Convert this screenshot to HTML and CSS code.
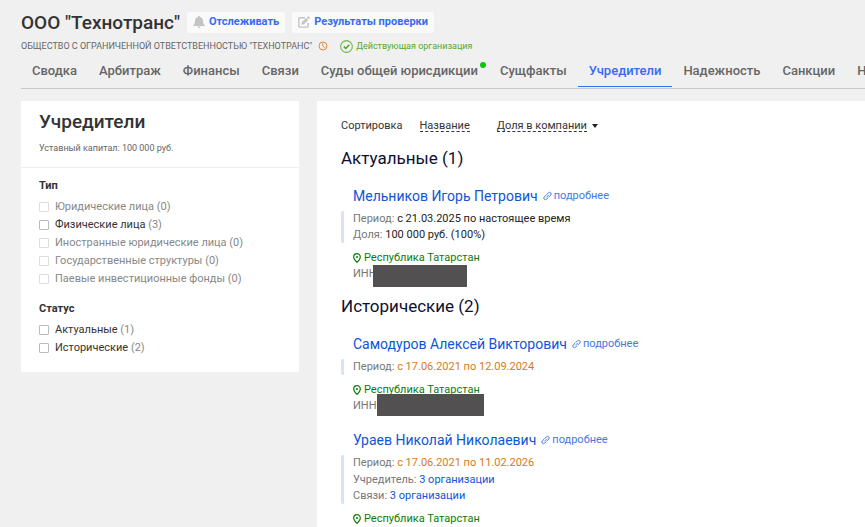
FILE: index.html
```html
<!DOCTYPE html>
<html lang="ru">
<head>
<meta charset="utf-8">
<meta name="viewport" content="width=device-width, initial-scale=1">
<title>ООО "Технотранс"</title>
<link rel="stylesheet" href="styles.css">
</head>
<body>
<svg class="sprite" aria-hidden="true">
  <symbol id="link" viewBox="0 0 10 10"><g fill="none" stroke="currentColor" stroke-width="1.1" stroke-linecap="round"><path d="M4 6.2 6.2 4M4.3 3.2 6 1.5a1.7 1.7 0 0 1 2.6 2.5L6.9 5.700M5.700 6.900 4 8.500a1.700 1.700 0 0 1-2.600-2.500L3.200 4.300"/></g></symbol>
  <symbol id="pin" viewBox="0 0 8 10"><path d="M4 9.300C2 7.300.7 5.700.7 3.900a3.300 3.300 0 0 1 6.600 0C7.300 5.700 6 7.300 4 9.300Z" fill="none" stroke="currentColor" stroke-width="1.200"/><circle cx="4" cy="4" r="1" fill="currentColor"/></symbol>
</svg>
<header class="header">
  <div class="title-row">
    <h1 class="company">ООО "Технотранс"</h1>
    <button class="action" type="button"><svg class="bell" viewBox="0 0 12 12"><path d="M6 0c.6 0 1 .4 1 1 1.900.5 3 1.900 3 4 0 2.500.7 3.300 1.500 4 .4.400.200 1-.400 1H.9c-.6 0-.8-.6-.4-1C1.300 8.300 2 7.500 2 5c0-2.100 1.100-3.500 3-4 0-.6.4-1 1-1ZM4.500 10.600h3a1.500 1.400 0 0 1-3 0Z" fill="#c4c4c4"/></svg>Отслеживать</button>
    <button class="action" type="button"><svg class="edit" viewBox="0 0 12 12"><path d="M7 1.700H2A1.200 1.200 0 0 0 .8 2.900v7A1.200 1.200 0 0 0 2 11.100h7a1.200 1.200 0 0 0 1.200-1.200V7" fill="none" stroke="#c4c4c4" stroke-width="1.400"/><path d="m3.800 6.300 4.400-4.400 2 2-4.400 4.400-2.300.400ZM8.800 1.300 9.700.4q.5-.4 1 0l1 1q.4.500 0 1l-.9.900Z" fill="#c4c4c4"/></svg>Результаты проверки</button>
  </div>
  <div class="legal">
    <span>ОБЩЕСТВО С ОГРАНИЧЕННОЙ ОТВЕТСТВЕННОСТЬЮ "ТЕХНОТРАНС"</span>
    <svg class="clock" viewBox="0 0 10 10"><g fill="none" stroke="#e08a3c"><circle cx="5" cy="5" r="4"/><path d="M4.700 2.500V5l2 1.600"/></g></svg>
    <span class="state"><svg class="check" viewBox="0 0 12 12"><circle cx="6" cy="6" r="5.400" fill="none" stroke="#6fb944"/><path d="m3.500 6 1.800 1.800 3.300-3.400" fill="none" stroke="#4aa51c" stroke-width="1.400"/></svg>Действующая организация</span>
  </div>
  <nav class="tabs">
    <a class="tab" href="#">Сводка</a>
    <a class="tab" href="#">Арбитраж</a>
    <a class="tab" href="#">Финансы</a>
    <a class="tab" href="#">Связи</a>
    <a class="tab dotted" href="#">Суды общей юрисдикции</a>
    <a class="tab" href="#">Сущфакты</a>
    <a class="tab active" href="#" aria-current="page">Учредители</a>
    <a class="tab" href="#">Надежность</a>
    <a class="tab" href="#">Санкции</a>
    <a class="tab" href="#">Новости</a>
  </nav>
</header>
<div class="layout">
  <aside class="filters">
    <div class="filters-head">
      <h2 class="filters-title">Учредители</h2>
      <p class="capital">Уставный капитал: 100 000 руб.</p>
    </div>
    <fieldset class="group">
      <legend>Тип</legend>
      <label class="option off"><input type="checkbox" disabled><span>Юридические лица <i>(0)</i></span></label>
      <label class="option"><input type="checkbox"><span>Физические лица <i>(3)</i></span></label>
      <label class="option off"><input type="checkbox" disabled><span>Иностранные юридические лица <i>(0)</i></span></label>
      <label class="option off"><input type="checkbox" disabled><span>Государственные структуры <i>(0)</i></span></label>
      <label class="option off"><input type="checkbox" disabled><span>Паевые инвестиционные фонды <i>(0)</i></span></label>
    </fieldset>
    <fieldset class="group">
      <legend>Статус</legend>
      <label class="option"><input type="checkbox"><span>Актуальные <i>(1)</i></span></label>
      <label class="option"><input type="checkbox"><span>Исторические <i>(2)</i></span></label>
    </fieldset>
  </aside>
  <main class="content">
    <div class="sort">
      <span>Сортировка</span>
      <button type="button" class="sort-by"><span>Название</span></button>
      <button type="button" class="sort-by current"><span>Доля в компании</span></button>
    </div>
    <section>
      <h2 class="section-title">Актуальные (1)</h2>
      <article class="founder">
        <h3 class="name"><a href="#">Мельников Игорь Петрович</a><a class="more" href="#"><svg><use href="#link"/></svg>подробнее</a></h3>
        <div class="facts">
          <p>Период: <b>с 21.03.2025 по настоящее время</b></p>
          <p>Доля: <b>100 000 руб. (100%)</b></p>
        </div>
        <p class="region"><svg><use href="#pin"/></svg>Республика Татарстан</p>
        <p class="inn">ИНН:<span class="mask"></span></p>
      </article>
    </section>
    <section>
      <h2 class="section-title">Исторические (2)</h2>
      <article class="founder">
        <h3 class="name"><a href="#">Самодуров Алексей Викторович</a><a class="more" href="#"><svg><use href="#link"/></svg>подробнее</a></h3>
        <div class="facts">
          <p>Период: <b class="past">с 17.06.2021 по 12.09.2024</b></p>
        </div>
        <p class="region"><svg><use href="#pin"/></svg>Республика Татарстан</p>
        <p class="inn">ИНН:<span class="mask wide"></span></p>
      </article>
      <article class="founder">
        <h3 class="name"><a href="#">Ураев Николай Николаевич</a><a class="more" href="#"><svg><use href="#link"/></svg>подробнее</a></h3>
        <div class="facts">
          <p>Период: <b class="past">с 17.06.2021 по 11.02.2026</b></p>
          <p class="relation">Учредитель: <a href="#">3 организации</a></p>
          <p>Связи: <a href="#">3 организации</a></p>
        </div>
        <p class="region"><svg><use href="#pin"/></svg>Республика Татарстан</p>
      </article>
    </section>
  </main>
</div>
</body>
</html>
```
FILE: styles.css
```css
* { box-sizing: border-box; margin: 0; padding: 0; }
body {
  display: flex;
  flex-direction: column;
  min-height: 100vh;
  background: #f0f0f0;
  color: #333;
  font: 11px/16px Roboto, sans-serif;
}
a { color: #0f55d8; text-decoration: none; }
button { border: 0; background: none; font: inherit; color: inherit; cursor: pointer; }
svg { flex: none; }
.sprite { position: absolute; width: 0; height: 0; }

.header { padding: 12px 0 0 21px; }
.title-row { display: flex; align-items: center; gap: 7px; white-space: nowrap; }
.company { font-size: 19px; line-height: 21px; font-weight: 500; color: #333; }
.action {
  display: flex;
  align-items: center;
  gap: 4px;
  height: 21px;
  padding: 0 6px 1px;
  border-radius: 3px;
  background: #fafafa;
  color: #356bf5;
  font-weight: 700;
}
.bell, .edit { width: 12px; height: 12px; }
.legal { display: flex; align-items: center; gap: 6px; height: 16px; margin-top: 5px; font-size: 9px; color: #666; white-space: nowrap; }
.clock { width: 10px; height: 10px; }
.state { display: flex; align-items: center; gap: 3px; margin-left: 6px; color: #55aa26; }
.check { width: 13px; height: 13px; }

.tabs { display: flex; height: 35px; padding-bottom: 1px; border-bottom: 1px solid #c8c8c8; overflow: hidden; white-space: nowrap; }
.tab { position: relative; flex: none; height: 33px; padding: 9px 11px 0; border-bottom: 1px solid transparent; color: #666; font-size: 13px; font-weight: 500; }
.tab.active { color: #356bf5; border-color: #356bf5; }
.dotted::after { content: ""; position: absolute; top: 8px; right: 3px; width: 6px; height: 6px; border-radius: 50%; background: #0bc50b; }

.layout { flex: 1; display: grid; grid-template-columns: 278px minmax(0, 1fr); gap: 18px; padding: 12px 0 0 21px; }
.filters { align-self: start; padding-bottom: 15px; background: #fff; }
.filters-head { padding: 11px 18px; border-bottom: 1px solid #eee; }
.filters-title { font-size: 19px; line-height: 20px; font-weight: 500; }
.capital { margin-top: 8px; font-size: 9px; color: #666; }
.group { border: 0; padding: 10px 18px 0; }
.group + .group { padding-top: 13px; }
.group legend { float: left; width: 100%; margin-bottom: 4px; font-weight: 700; }
.option { display: flex; clear: both; align-items: center; gap: 6px; height: 18px; }
.option input { appearance: none; width: 10px; height: 10px; border: 1px solid #bbb; border-radius: 1px; }
.option i { font-style: normal; color: #888; }
.off { color: #888; }
.off input { border-color: #ddd; }

.content { padding: 17px 24px 0; background: #fff; }
.sort { display: flex; gap: 17px; }
.sort-by { display: flex; align-items: center; gap: 5px; }
.sort-by span { line-height: 11px; border-bottom: 1px dashed #333; }
.current { margin-left: 10px; }
.current::after { content: ""; border: 3px solid transparent; border-top: 4px solid #222; border-bottom: 0; }
.section-title { margin-top: 14px; font-size: 17px; line-height: 20px; font-weight: 400; color: #0b1033; }
.founder { padding-left: 12px; }
.section-title + .founder { margin-top: 18px; }
.founder + .founder { margin-top: 16px; }
.name { display: flex; align-items: center; gap: 5px; font-size: 14px; line-height: 20px; font-weight: 400; }
.more { display: flex; align-items: center; gap: 2px; font-size: 11px; color: #4678e0; }
.more svg { width: 9px; height: 10px; }
.facts { margin: 5px 0 0 -12px; padding-left: 9px; border-left: 3px solid #dbe1fd; border-radius: 2px; color: #777; }
.facts b { font-weight: 400; color: #222; }
.facts .past { color: #d87a14; }
.facts .relation { line-height: 17px; }
.region { display: flex; align-items: center; gap: 3px; margin-top: 7px; color: #0b7b0b; }
.region svg { width: 8px; height: 10px; }
.inn { position: relative; color: #777; }
.mask { position: absolute; left: 20px; top: -1px; width: 94px; height: 22px; background: #525051; }
.wide { left: 24px; top: -4px; width: 107px; }
```
